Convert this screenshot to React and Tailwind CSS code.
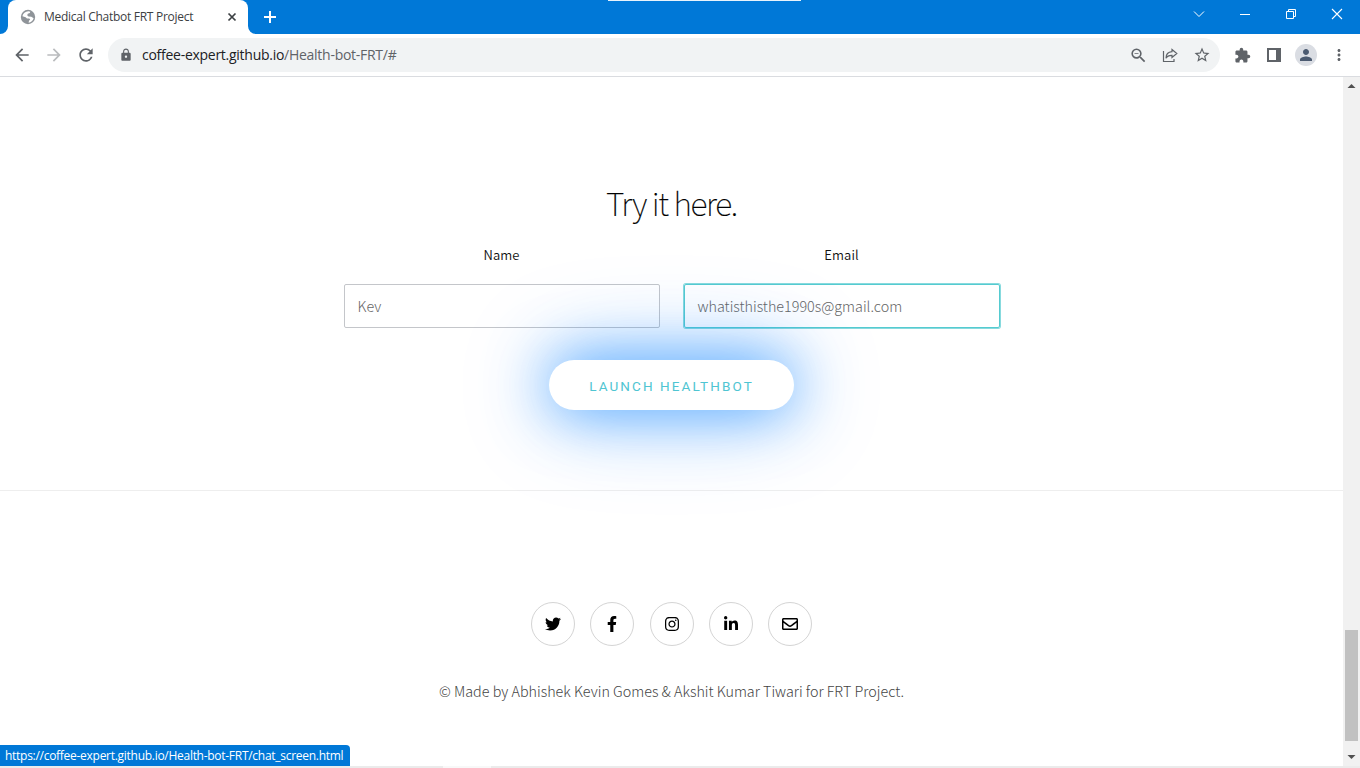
import React from "react";
import { FaTwitter, FaFacebookF, FaInstagram, FaLinkedinIn, FaRegEnvelope } from "react-icons/fa";
import { MdArrowBack, MdArrowForward, MdRefresh, MdLock, MdStarBorder, MdExtension, MdPerson, MdMoreVert, MdZoomOut } from "react-icons/md";

function Globe() {
  return (
    <svg className="mr-px size-4" viewBox="0 0 16 16">
      <circle cx="8" cy="8" r="7.200" fill="#8f9499" />
      <path d="M8.500 2.300L10.300 2.700 9.800 4 7.800 4.800 7.200 6.300 8.500 7.600 11.300 7.700 13.600 9.200C13 11.700 11 13.500 8.600 13.700L9 11.700 10.200 10.600 9.300 9.600 7 9.500 5.600 8.200 2.500 7.200C2.900 4.500 5.400 2.400 8.500 2.300Z" fill="#fff" />
    </svg>
  );
}

function TitleBar() {
  return (
    <div className="flex h-[34px] shrink-0 bg-[#0078d7]">
      <div className="relative ml-2 flex w-[240px] items-center rounded-t-[8px] bg-white pl-3">
        <svg className="absolute bottom-0 -left-2" width="8" height="8"><path d="M8 0A8 8 0 0 1 0 8H8Z" fill="#fff" /></svg>
        <svg className="absolute -right-2 bottom-0" width="8" height="8"><path d="M0 0A8 8 0 0 0 8 8H0Z" fill="#fff" /></svg>
        <Globe />
        <span className="ml-[7px] w-[176px] font-['Open_Sans',sans-serif] text-[12px] tracking-[-0.28px] whitespace-nowrap text-[#3c4043]">Medical Chatbot FRT Project</span>
        <svg width="24" height="24" viewBox="0 0 24 24" fill="none" stroke="#3c4043" strokeWidth="1.7"><path d="M8.500 8.500l7 7M15.500 8.500l-7 7" /></svg>
      </div>
      <div className="relative flex flex-1 items-center justify-between">
        <svg className="ml-[14px]" width="16" height="16" fill="none" stroke="#fff" strokeWidth="2"><path d="M8 2v12M2 8h12" /></svg>
        <div className="absolute top-0 left-[360px] h-px w-[193px] bg-[#e8f3fc]" />
        <div className="-mt-[6px] flex h-[28px] items-center gap-[30px] pr-[15px]">
          <svg width="16" height="16" fill="none" stroke="#fff"><path d="M3 5.5l5 5 5-5" /></svg>
          <svg width="16" height="16" fill="none" stroke="#fff"><path d="M3 8.500h10" /></svg>
          <svg width="16" height="16" fill="none" stroke="#fff"><path d="M3.500 5.500h7v7h-7zM5.500 5.500v-2h7v7h-2" /></svg>
          <svg width="16" height="16" fill="none" stroke="#fff" strokeWidth="1.1"><path d="M3 3l10 10M13 3L3 13" /></svg>
        </div>
      </div>
    </div>
  );
}

function Toolbar() {
  return (
    <div className="flex h-[43px] shrink-0 items-center border-b border-[#dadce0] bg-white pl-3 text-[#5f6368]">
      <MdArrowBack className="size-5" />
      <MdArrowForward className="ml-3 size-5 text-[#babcbe]" />
      <MdRefresh className="ml-3 size-5" />
      <div className="ml-3 flex h-[34px] w-[1112px] items-center rounded-full bg-[#f1f3f4] pl-[11px] pr-[9px]">
        <MdLock className="size-[14px]" />
        <div className="-mt-px ml-[9px] flex-1 font-['Open_Sans',sans-serif] text-[14px] tracking-[-0.27px] whitespace-nowrap text-[#202124]">
          coffee-expert.github.io<span className="text-[#5f6368]">/Health-bot-FRT/#</span>
        </div>
        <MdZoomOut className="size-[19px]" />
        <svg className="ml-[14px]" width="16" height="16" viewBox="0 0 16 16" fill="none" stroke="#5f6368" strokeWidth="1.2"><path d="M1.500 4v10.500H12V12" /><path d="M10 2.500L14.800 6.500 10 10.500V8.300C7 8.200 5 9.200 4 11.200c0-4 2.500-6.200 6-6.500z" /></svg>
        <MdStarBorder className="ml-[15px] size-[18px]" />
      </div>
      <MdExtension className="ml-[13.500px] size-[17px]" />
      <svg className="ml-[16.500px]" width="14" height="14"><path fillRule="evenodd" d="M0 0h14v14H0zM2 2v10h7V2z" fill="#5f6368" /></svg>
      <div className="ml-[14px] flex size-[22px] items-center justify-center rounded-full bg-[#dadde3]"><MdPerson className="size-[18px] text-[#4b5a70]" /></div>
      <MdMoreVert className="ml-[12.500px] size-[18px]" />
    </div>
  );
}

function Field({ label, value, active }) {
  return (
    <label className="flex w-[316px] flex-col items-center">
      <span className="h-[22px] text-[13px] leading-[22px] font-[350] tracking-[0.1px] text-[#111]">{label}</span>
      <span className={active
        ? "mt-[18px] flex h-[44px] w-full items-center rounded-[2px] border border-[#55cbd0] pl-[13px] shadow-[0_0_0_1px_rgba(85,203,208,0.7)]"
        : "mt-[18px] flex h-[44px] w-full items-center rounded-[2px] border border-[#c4c6ca] pl-[13px]"}>
        <span className="text-[14.350px] font-light whitespace-nowrap text-[#666]">{value}</span>
      </span>
    </label>
  );
}

const socials = [FaTwitter, FaFacebookF, FaInstagram, FaLinkedinIn, FaRegEnvelope];

function Scrollbar() {
  return (
    <div className="flex w-[17px] shrink-0 flex-col items-center bg-[#f1f1f1]">
      <svg width="17" height="17"><path d="M4.500 11h8l-4-4z" fill="#505050" /></svg>
      <div className="mt-[536px] h-[111px] w-[13px] bg-[#c1c1c1]" />
      <svg className="mt-[7px]" width="17" height="17"><path d="M4.500 7h8l-4 4z" fill="#505050" /></svg>
    </div>
  );
}

export default function App() {
  return (
    <div className="relative flex h-[768px] w-[1360px] flex-col overflow-hidden bg-white font-['Noto_Sans_CJK_SC',sans-serif]">
      <TitleBar />
      <Toolbar />
      <div className="flex h-[689px] shrink-0">
        <main className="flex flex-1 flex-col">
          <section className="flex h-[414px] flex-col items-center border-b border-[#eee] pt-[100px]">
            <h2 className="h-[50px] text-[32px] leading-[50px] font-thin tracking-[-1.3px] whitespace-nowrap text-black [-webkit-text-stroke:0.2px_black]">Try it here.</h2>
            <div className="mt-[17px] flex gap-6">
              <Field label="Name" value="Kev" />
              <Field label="Email" value="whatisthisthe1990s@gmail.com" active />
            </div>
            <button className="mt-[32px] flex h-[50px] w-[245px] items-center justify-center rounded-full bg-white pt-[2px] font-['Roboto',sans-serif] text-[13.500px] tracking-[2.1px] whitespace-nowrap text-[#4fc5d2] shadow-[0_0_60px_rgba(0,125,255,0.7),0_0_100px_rgba(0,120,255,0.32)]">LAUNCH HEALTHBOT</button>
          </section>
          <footer className="flex flex-1 flex-col items-center pt-[111px]">
            <div className="flex gap-[15.300px]">
              {socials.map((Icon, i) => (
                <a key={i} className="flex size-[44px] items-center justify-center rounded-full border border-[#d4d4d4] text-black"><Icon className="size-4" /></a>
              ))}
            </div>
            <p className="mt-[33px] text-[14.350px] leading-6 font-light whitespace-nowrap text-[#444]">© Made by Abhishek Kevin Gomes &amp; Akshit Kumar Tiwari for FRT Project.</p>
          </footer>
        </main>
        <Scrollbar />
      </div>
      <div className="flex h-[2px] bg-[#ebebeb]"><div className="ml-[443px] h-full w-[48px] bg-[#f8f8f8]" /></div>
      <div className="absolute bottom-[2px] left-0 flex h-[21px] w-[350px] items-center rounded-tr-[4px] bg-[#0078d7] pl-[5px] font-['Open_Sans',sans-serif] text-[12px] tracking-[-0.28px] whitespace-nowrap text-white">https://coffee-expert.github.io/Health-bot-FRT/chat_screen.html</div>
    </div>
  );
}
